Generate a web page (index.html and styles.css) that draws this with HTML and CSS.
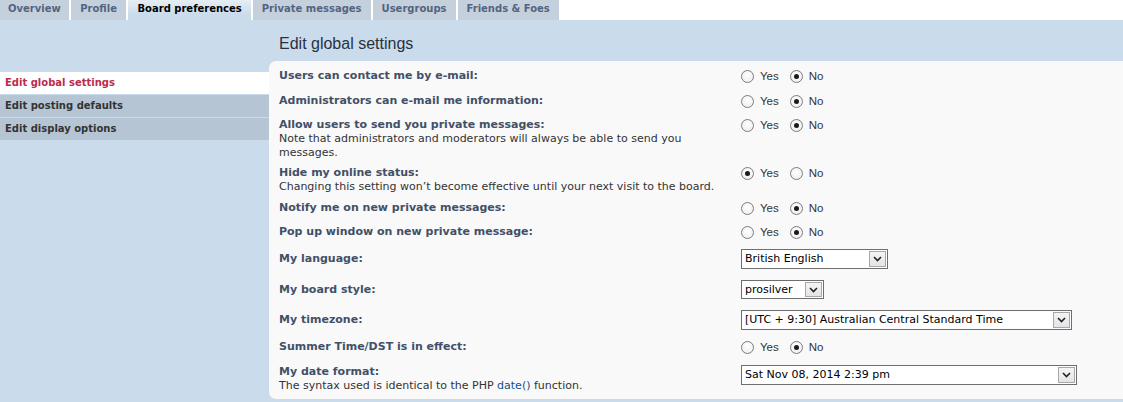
FILE: index.html
```html
<!DOCTYPE html>
<html>
<head>
<meta charset="utf-8">
<link rel="stylesheet" href="styles.css">
</head>
<body>
<div class="tabs">
  <a class="tab">Overview</a>
  <a class="tab">Profile</a>
  <a class="tab active">Board preferences</a>
  <a class="tab">Private messages</a>
  <a class="tab">Usergroups</a>
  <a class="tab">Friends &amp; Foes</a>
</div>
<div class="main">
  <ul class="side">
    <li class="nav active">Edit global settings</li>
    <li class="nav">Edit posting defaults</li>
    <li class="nav">Edit display options</li>
  </ul>
  <div class="content">
    <h2 class="title">Edit global settings</h2>
    <div class="panel">
      <div class="row">
        <div class="lbl"><b>Users can contact me by e-mail:</b></div>
        <div class="opts"><span class="radio"></span><span class="rl">Yes</span><span class="radio on"></span><span class="rl">No</span></div>
      </div>
      <div class="row mt1">
        <div class="lbl"><b>Administrators can e-mail me information:</b></div>
        <div class="opts"><span class="radio"></span><span class="rl">Yes</span><span class="radio on"></span><span class="rl">No</span></div>
      </div>
      <div class="row desc-row">
        <div class="lbl"><b>Allow users to send you private messages:</b><span class="desc">Note that administrators and moderators will always be able to send you messages.</span></div>
        <div class="opts"><span class="radio"></span><span class="rl">Yes</span><span class="radio on"></span><span class="rl">No</span></div>
      </div>
      <div class="row desc-row">
        <div class="lbl"><b>Hide my online status:</b><span class="desc">Changing this setting won’t become effective until your next visit to the board.</span></div>
        <div class="opts"><span class="radio on"></span><span class="rl">Yes</span><span class="radio"></span><span class="rl">No</span></div>
      </div>
      <div class="row">
        <div class="lbl"><b>Notify me on new private messages:</b></div>
        <div class="opts"><span class="radio"></span><span class="rl">Yes</span><span class="radio on"></span><span class="rl">No</span></div>
      </div>
      <div class="row">
        <div class="lbl"><b>Pop up window on new private message:</b></div>
        <div class="opts"><span class="radio"></span><span class="rl">Yes</span><span class="radio on"></span><span class="rl">No</span></div>
      </div>
      <div class="row sel-row">
        <div class="lbl"><b>My language:</b></div>
        <div class="opts"><div class="select w-lang"><span class="sv">British English</span><span class="arrow"><svg width="9" height="6" viewBox="0 0 9 6"><path d="M1 1 L4.5 4.5 L8 1" fill="none" stroke="#222" stroke-width="1.6"/></svg></span></div></div>
      </div>
      <div class="row sel-row">
        <div class="lbl"><b>My board style:</b></div>
        <div class="opts"><div class="select w-style"><span class="sv">prosilver</span><span class="arrow"><svg width="9" height="6" viewBox="0 0 9 6"><path d="M1 1 L4.5 4.5 L8 1" fill="none" stroke="#222" stroke-width="1.6"/></svg></span></div></div>
      </div>
      <div class="row sel-row">
        <div class="lbl"><b>My timezone:</b></div>
        <div class="opts"><div class="select w-tz"><span class="sv">[UTC + 9:30] Australian Central Standard Time</span><span class="arrow"><svg width="9" height="6" viewBox="0 0 9 6"><path d="M1 1 L4.5 4.5 L8 1" fill="none" stroke="#222" stroke-width="1.6"/></svg></span></div></div>
      </div>
      <div class="row">
        <div class="lbl"><b>Summer Time/DST is in effect:</b></div>
        <div class="opts"><span class="radio"></span><span class="rl">Yes</span><span class="radio on"></span><span class="rl">No</span></div>
      </div>
      <div class="row mt1">
        <div class="lbl"><b>My date format:</b><span class="desc">The syntax used is identical to the PHP <a class="link">date()</a> function.</span></div>
        <div class="opts top"><div class="select w-date"><span class="sv">Sat Nov 08, 2014 2:39 pm</span><span class="arrow"><svg width="9" height="6" viewBox="0 0 9 6"><path d="M1 1 L4.5 4.5 L8 1" fill="none" stroke="#222" stroke-width="1.6"/></svg></span></div></div>
      </div>
    </div>
  </div>
</div>
</body>
</html>
```

FILE: styles.css
```css
* { box-sizing: border-box; }
html, body { margin: 0; padding: 0; background: #fff; }
body { font-family: "DejaVu Sans", Verdana, sans-serif; color: #333; width: 1123px; height: 402px; overflow: hidden; }

.tabs { display: flex; gap: 2px; height: 20px; background: #fff; }
.tab {
  display: block; height: 20px; line-height: 18px; padding: 0 9px;
  font-size: 10px; font-weight: bold; color: #536482;
  background: #c4d1dc;
}
.tab:first-child { padding-left: 8px; padding-right: 8px; }
.tab:nth-child(2) { padding-left: 9.5px; padding-right: 9.5px; }
.tab.active { background: linear-gradient(#e6eef5, #cadceb 70%); color: #000; }

.main { display: grid; grid-template-columns: 269px 1fr; background: #cadceb; padding-bottom: 4px; }

.side { list-style: none; margin: 0; padding: 52px 0 0 0; }
.nav {
  height: 22px; line-height: 22px; margin-bottom: 1px; padding-left: 5px;
  font-size: 10px; font-weight: bold; color: #333; background: #b5c5d3;
}
.nav.active { background: #fff; color: #bc2a4d; }

.content { display: flex; flex-direction: column; }
.title {
  margin: 0; height: 41px; padding: 15px 0 0 10px;
  font-family: "Liberation Sans", Arial, sans-serif; font-weight: normal; font-size: 16px; line-height: 18px; color: #28313f;
}
.panel { background: #f9f9f9; border-radius: 7px 0 0 7px; padding: 8px 0 6px 10px; display: flex; flex-direction: column; gap: 10px; }

.row { display: flex; align-items: flex-start; font-size: 11px; line-height: 14px; }
.row.mt1 { margin-top: 1px; }
.row.desc-row { margin-bottom: -4px; }
.row.desc-row + .row.desc-row { margin-bottom: -3px; }
.row.sel-row { align-items: center; }
.row.sel-row + .row.sel-row { margin-top: 1px; }
.lbl { width: 462px; flex: none; padding-right: 12px; }
.lbl b { display: block; color: #425067; }
.desc { display: block; color: #333; }
.link { color: #105289; }

.opts { display: flex; align-items: center; height: 14px; }
.sel-row .opts { height: auto; }
.opts.top { height: auto; }

.radio {
  width: 13px; height: 13px; border-radius: 50%; border: 1px solid #7c7c7c;
  background: radial-gradient(circle at 50% 40%, #fff, #eaeaea);
  display: flex; align-items: center; justify-content: center; flex: none;
}
.radio.on::after { content: ""; width: 5px; height: 5px; border-radius: 50%; background: #1a1a1a; }
.rl { font-family: "Liberation Sans", Arial, sans-serif; font-size: 11.5px; color: #333; margin: 0 11px 0 6px; }

.select {
  display: flex; align-items: center; height: 20px; background: #fff;
  border: 1px solid #6e6e6e; padding: 0 1px 0 3px;
  font-size: 11px; color: #000; line-height: 16px;
}
.sv { flex: 1; white-space: nowrap; overflow: hidden; }
.arrow {
  width: 17px; height: 16px; border: 1px solid #a8a8a8; flex: none;
  background: linear-gradient(#f4f4f4, #e2e4e7);
  display: flex; align-items: center; justify-content: center;
}
.w-lang { width: 147px; }
.w-style { width: 83px; height: 19px; }
.w-style .arrow { height: 15px; }
.w-tz { width: 331px; }
.w-date { width: 336px; }
```
